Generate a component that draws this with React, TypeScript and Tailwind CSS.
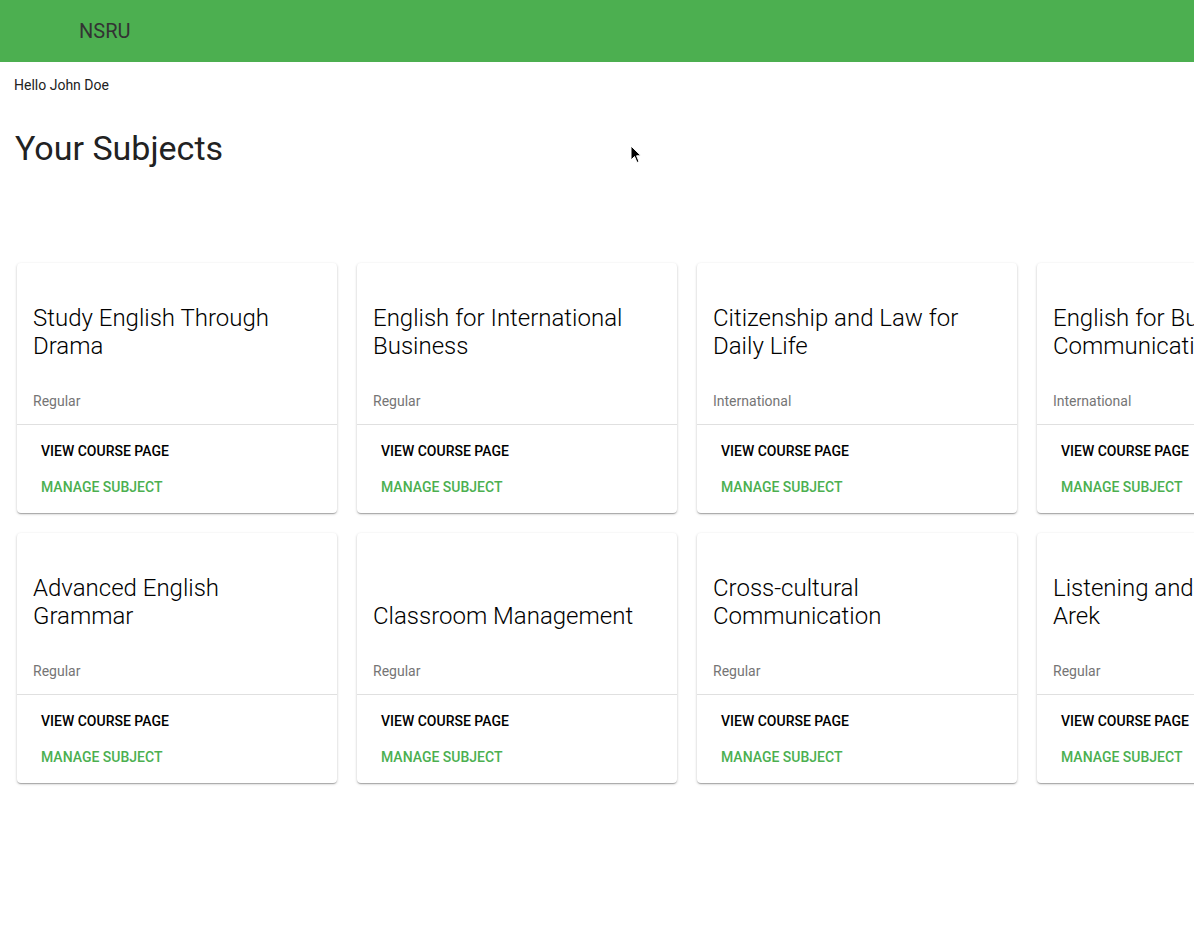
import React from 'react';

type Subject = { title: string; kind: string };

const subjects: Subject[] = [
  { title: 'Study English Through Drama', kind: 'Regular' },
  { title: 'English for International Business', kind: 'Regular' },
  { title: 'Citizenship and Law for Daily Life', kind: 'International' },
  { title: 'English for Business Communication', kind: 'International' },
  { title: 'Advanced English Grammar', kind: 'Regular' },
  { title: 'Classroom Management', kind: 'Regular' },
  { title: 'Cross-cultural Communication', kind: 'Regular' },
  { title: 'Listening and Speaking for Arek', kind: 'Regular' },
];

function SubjectCard({ subject }: { subject: Subject }) {
  return (
    <div className="flex h-[250px] w-[320px] shrink-0 flex-col rounded-[4px] bg-white shadow-[0_1px_3px_rgba(0,0,0,0.2),0_1px_1px_rgba(0,0,0,0.14),0_2px_1px_-1px_rgba(0,0,0,0.12)]">
      <div className="flex h-[161px] flex-col justify-end px-4 pb-[13px]">
        <div className="text-[24px] font-light leading-[28px] text-black">{subject.title}</div>
        <div className="mt-[31px] text-[14px] leading-[20px] text-[#757575]">{subject.kind}</div>
      </div>
      <div className="flex flex-col border-t border-[#e0e0e0] p-2">
        <button className="flex h-9 items-center px-4 text-left text-[14px] font-medium uppercase text-black">
          View course page
        </button>
        <button className="flex h-9 items-center px-4 text-left text-[14px] font-medium uppercase text-[#4caf50]">
          Manage subject
        </button>
      </div>
    </div>
  );
}

export default function App() {
  return (
    <div className="relative h-[929px] w-[1194px] overflow-hidden bg-white font-['Roboto',sans-serif]">
      <header className="flex h-[62px] items-center bg-[#4caf50] pl-[79px]">
        <span className="text-[20px] text-[#333]">NSRU</span>
      </header>
      <div className="px-[14px] pt-[14px] text-[14px] leading-[18px] text-[#222]">Hello John Doe</div>
      <h1 className="px-[15px] pt-[34px] text-[34px] leading-[40px] text-[#222]">Your Subjects</h1>
      <div className="mt-[95px] grid w-max grid-cols-[repeat(4,320px)] gap-5 px-[17px]">
        {subjects.map((s) => (
          <SubjectCard key={s.title} subject={s} />
        ))}
      </div>
      <svg className="absolute left-[630px] top-[145px]" width="12" height="19" viewBox="0 0 12 19">
        <path d="M1 1 L1 15 L4.5 11.5 L7 17.5 L9 16.6 L6.6 10.8 L11 10.8 Z" fill="#000" stroke="#fff" strokeWidth="1" />
      </svg>
    </div>
  );
}
